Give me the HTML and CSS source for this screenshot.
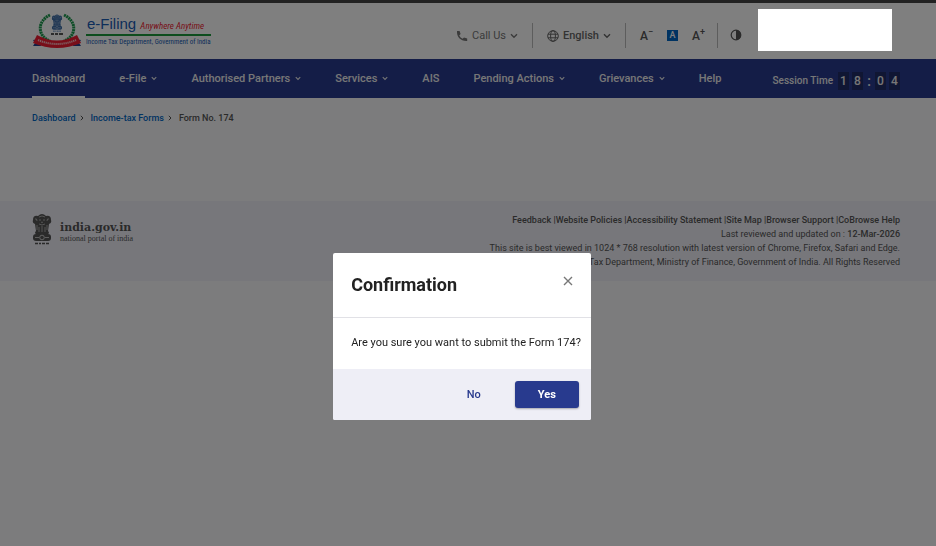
FILE: index.html
```html
<!DOCTYPE html>
<html lang="en">
<head>
    <meta charset="UTF-8">
    <meta name="viewport" content="width=device-width, initial-scale=1.0">
    <title>e-Filing - Form No. 174</title>
    <link rel="stylesheet" href="styles.css">
</head>
<body>

    <!-- shared icons -->
    <svg class="sprite" aria-hidden="true">
        <symbol id="chevron" viewBox="0 0 8 6">
            <path d="M1 1.2 L4 4.2 L7 1.2" fill="none" stroke="currentColor" stroke-width="1.4"/>
        </symbol>
        <symbol id="lions" viewBox="0 0 20 32">
            <path d="M6 3 Q10 -1 14 3 Q19 2 19 7 Q20 10 17 11 L16 18 Q18 20 16 21 H4 Q2 20 4 18 L3 11 Q0 10 1 7 Q1 2 6 3Z" fill="currentColor"/>
            <path d="M7 4 Q10 2 13 4 M7 7h2 M11 7h2 M9 9 Q10 10 11 9 M3 6 Q5 5 5 8 M17 6 Q15 5 15 8 M7 11 Q10 13 13 11 M7 14v5 M10 13v6 M13 14v5 M5 12v5 M15 12v5" fill="none" stroke="#fff" stroke-width="0.7" opacity="0.7"/>
            <rect x="1" y="21" width="18" height="7" rx="3" fill="currentColor"/>
            <circle cx="10" cy="24.500" r="2.300" fill="none" stroke="#fff" stroke-width="0.8" opacity="0.8"/>
            <path d="M3 24.500h4 M13 24.500h4" stroke="#fff" opacity="0.6"/>
            <path d="M3 30.500h3 M7 30.500h2 M10 30.500h3 M14 30.500h3" stroke="currentColor" stroke-width="1.500"/>
        </symbol>
    </svg>

    <header class="header">
        <a href="#" class="logo">
            <svg class="emblem" viewBox="0 0 50 36" aria-hidden="true">
                <path d="M18 2 C5 8 5 23 18 28" fill="none" stroke="#1d9a4e" stroke-width="3" stroke-dasharray="2 0.6"/>
                <path d="M32 2 C45 8 45 23 32 28" fill="none" stroke="#1d9a4e" stroke-width="3" stroke-dasharray="2 0.6"/>
                <circle cx="25" cy="12" r="9.500" fill="#fff" opacity="0.4"/>
                <svg x="19" y="1" width="12" height="18" viewBox="0 0 20 32" color="#3f6ea8"><use href="#lions"/></svg>
                <path d="M19 21h3 M23 21h3 M27 21h4" stroke="#222" stroke-width="1.500"/>
                <path d="M1 27 L8 26 L9 33 L1 33 L3 30Z M49 27 L42 26 L41 33 L49 33 L47 30Z" fill="#23408f"/>
                <path d="M5 22 Q25 33 45 22 L49 30 Q25 40 1 30Z" fill="#f01c33"/>
                <path d="M6 27 Q25 35 44 27" fill="none" stroke="#fff" stroke-width="2" stroke-dasharray="1.300 0.700" opacity="0.7"/>
            </svg>
            <span class="logo-text">
                <span class="logo-title">e-Filing <em>Anywhere Anytime</em></span>
                <span class="logo-sub">Income Tax Department, Government of India</span>
            </span>
        </a>
        <div class="tools">
            <button class="tool call">
                <svg width="12" height="12" viewBox="0 0 12 12" aria-hidden="true"><path d="M1 1h2.600l1 3-1.400 1.400a8 8 0 0 0 3.400 3.400L8 7.400l3.200 1V11C5 11.500 0.500 7 1 1Z" fill="currentColor"/></svg>
                <span>Call Us</span>
                <svg class="arrow" aria-hidden="true"><use href="#chevron"/></svg>
            </button>
            <button class="tool lang">
                <svg width="12" height="12" viewBox="0 0 12 12" fill="none" stroke="currentColor" aria-hidden="true"><circle cx="6" cy="6" r="5.300"/><ellipse cx="6" cy="6" rx="2.400" ry="5.300"/><path d="M1 4.200h10M1 7.800h10"/></svg>
                <span>English</span>
                <svg class="arrow" aria-hidden="true"><use href="#chevron"/></svg>
            </button>
            <div class="text-size">
                <button aria-label="Decrease text size">A<sup>−</sup></button>
                <button class="current" aria-label="Normal text size">A</button>
                <button aria-label="Increase text size">A<sup>+</sup></button>
            </div>
            <button class="contrast" aria-label="Contrast">
                <svg width="12" height="12" viewBox="0 0 12 12" aria-hidden="true"><circle cx="6" cy="6" r="4.800" fill="none" stroke="currentColor" stroke-width="1.200"/><path d="M6 1a5 5 0 0 1 0 10Z" fill="currentColor"/></svg>
            </button>
            <div class="user"></div>
        </div>
    </header>

    <nav class="nav">
        <a href="#" class="active">Dashboard</a>
        <a href="#">e-File <svg aria-hidden="true"><use href="#chevron"/></svg></a>
        <a href="#">Authorised Partners <svg aria-hidden="true"><use href="#chevron"/></svg></a>
        <a href="#">Services <svg aria-hidden="true"><use href="#chevron"/></svg></a>
        <a href="#">AIS</a>
        <a href="#">Pending Actions <svg aria-hidden="true"><use href="#chevron"/></svg></a>
        <a href="#">Grievances <svg aria-hidden="true"><use href="#chevron"/></svg></a>
        <a href="#">Help</a>
        <div class="session">
            <span class="session-label">Session Time</span>
            <span class="digit">1</span>
            <span class="digit">8</span>
            <span class="colon">:</span>
            <span class="digit">0</span>
            <span class="digit">4</span>
        </div>
    </nav>

    <main class="main">
        <div class="breadcrumb">
            <a href="#">Dashboard</a>
            <svg viewBox="0 0 4 6" aria-hidden="true"><path d="M0.800 0.800 L3 3 L0.800 5.200" fill="none" stroke="currentColor"/></svg>
            <a href="#">Income-tax Forms</a>
            <svg viewBox="0 0 4 6" aria-hidden="true"><path d="M0.800 0.800 L3 3 L0.800 5.200" fill="none" stroke="currentColor"/></svg>
            <span>Form No. 174</span>
        </div>
    </main>

    <footer class="footer">
        <a href="#" class="india">
            <svg width="20" height="32" aria-hidden="true"><use href="#lions"/></svg>
            <span class="india-text">
                <b>india.gov.in</b>
                <small>national portal of india</small>
            </span>
        </a>
        <div class="footer-text">
            <p class="links"><a href="#">Feedback</a> |<a href="#">Website Policies</a> |<a href="#">Accessibility Statement</a> |<a href="#">Site Map</a> |<a href="#">Browser Support</a> |<a href="#">CoBrowse Help</a></p>
            <p>Last reviewed and updated on : <b>12-Mar-2026</b></p>
            <p>This site is best viewed in 1024 * 768 resolution with latest version of Chrome, Firefox, Safari and Edge.</p>
            <p>Copyright © Income Tax Department, Ministry of Finance, Government of India. All Rights Reserved</p>
        </div>
    </footer>

    <div class="overlay">
        <div class="modal" role="dialog" aria-modal="true" aria-labelledby="modal-title">
            <div class="modal-header">
                <h2 id="modal-title">Confirmation</h2>
                <button class="close" aria-label="Close">
                    <svg width="10" height="10" viewBox="0 0 10 10" aria-hidden="true"><path d="M1 1 L9 9 M9 1 L1 9" stroke="currentColor" stroke-width="1.400"/></svg>
                </button>
            </div>
            <p class="modal-body">Are you sure you want to submit the Form 174?</p>
            <div class="modal-footer">
                <button class="btn">No</button>
                <button class="btn primary">Yes</button>
            </div>
        </div>
    </div>

</body>
</html>
```

FILE: styles.css
```css
* {
    box-sizing: border-box;
}

body {
    margin: 0;
    font-family: Roboto, sans-serif;
    font-size: 11px;
    color: #555;
    background-color: #f9f9fb;
}

a {
    color: inherit;
    text-decoration: none;
}

button {
    padding: 0;
    border: none;
    background: none;
    font: inherit;
    color: inherit;
    cursor: pointer;
}

.sprite {
    display: none;
}

.header {
    display: flex;
    justify-content: space-between;
    height: 59px;
    padding: 0 44px 0 32px;
    border-top: 3px solid #444;
    background-color: #fff;
}

.logo {
    display: flex;
    align-items: center;
    gap: 4px;
}

.emblem {
    width: 50px;
    height: 36px;
}

.logo-text {
    display: flex;
    flex-direction: column;
    padding-top: 2px;
    font-family: "Roboto Condensed", "Liberation Sans", sans-serif;
    color: #1a5cb4;
}

.logo-title {
    padding-left: 1px;
    font-family: "Liberation Sans", sans-serif;
    font-size: 15px;
    line-height: 16px;
    border-bottom: 2px solid #1d9a3c;
    white-space: nowrap;
}

.logo-title em {
    font-family: "Roboto Condensed", "Liberation Sans", sans-serif;
    font-size: 9px;
    color: #f01c33;
}

.logo-sub {
    font-size: 7px;
    line-height: 12px;
}

.tools {
    display: flex;
    align-items: center;
}

.tool {
    display: flex;
    align-items: center;
    gap: 4px;
    height: 25px;
    margin-top: 9px;
}

.arrow {
    width: 8px;
    height: 6px;
}

.call {
    padding-right: 14px;
    color: #777;
}

.lang {
    padding: 0 14px;
    border-left: 1px solid #bbb;
    border-right: 1px solid #bbb;
    font-weight: 500;
    color: #666;
}

.text-size {
    display: flex;
    align-items: center;
    gap: 14px;
    height: 25px;
    margin-top: 9px;
    padding: 0 12px 0 14px;
    border-right: 1px solid #bbb;
    font-size: 12px;
    font-weight: 500;
}

.text-size sup {
    font-size: 9px;
    line-height: 0;
}

.text-size .current {
    width: 11px;
    height: 11px;
    font-size: 9px;
    line-height: 11px;
    color: #fff;
    background-color: #0067c5;
}

.contrast {
    display: flex;
    margin: 8px 16px 0 12px;
}

/* sits above the page overlay */
.user {
    position: relative;
    z-index: 20;
    width: 134px;
    height: 42px;
    margin-bottom: 2px;
    background-color: #fff;
}

.nav {
    display: flex;
    gap: 34px;
    height: 39px;
    padding: 0 36px 0 32px;
    background-color: #283a8e;
    color: #eee;
    font-weight: 500;
}

.nav a {
    display: flex;
    align-items: center;
    gap: 5px;
    padding-top: 2px;
    border-bottom: 2px solid transparent;
    white-space: nowrap;
}

.nav a.active {
    border-bottom-color: #fff;
}

.nav svg {
    width: 6px;
    height: 5px;
}

.session {
    display: flex;
    align-items: center;
    gap: 3px;
    margin-left: auto;
    padding-top: 4px;
    white-space: nowrap;
}

.session-label {
    margin-right: 2px;
    font-size: 10px;
}

.digit {
    width: 11px;
    font-size: 12px;
    line-height: 18px;
    text-align: center;
    background-color: #212c66;
}

.colon {
    width: 6px;
    font-size: 14px;
    line-height: 18px;
    text-align: center;
}

.main {
    min-height: 103px;
    padding: 13px 32px;
}

.breadcrumb {
    display: flex;
    align-items: center;
    gap: 4px;
    font-size: 9px;
    line-height: 14px;
    font-weight: 500;
}

.breadcrumb a {
    color: #0067c5;
}

.breadcrumb svg {
    width: 4px;
    height: 6px;
    margin-right: 3px;
}

.footer {
    display: flex;
    justify-content: space-between;
    align-items: flex-start;
    padding: 12px 36px 12px 32px;
    background-color: #eeeef6;
    font-size: 9px;
}

.india {
    display: flex;
    align-items: center;
    gap: 8px;
}

.india-text {
    padding-top: 6px;
}

.india b,
.india small {
    display: block;
}

.india b {
    font-family: "DejaVu Serif", serif;
    font-size: 11px;
    line-height: 12px;
}

.india small {
    font-family: "Liberation Serif", serif;
    font-size: 8px;
    line-height: 9px;
}

.footer-text {
    text-align: right;
}

.footer-text p {
    margin: 0;
    line-height: 14px;
}

.footer-text b,
.links {
    font-weight: 500;
}

.overlay {
    position: fixed;
    inset: 0;
    z-index: 10;
    display: flex;
    align-items: flex-start;
    justify-content: center;
    padding-top: 253px;
    background-color: rgba(0, 0, 0, 0.5);
}

.modal {
    margin-right: 12px;
    border-radius: 2px;
    overflow: hidden;
    background-color: #fff;
    color: #222;
}

.modal-header {
    display: flex;
    justify-content: space-between;
    align-items: flex-start;
    padding: 20px 18px;
    border-bottom: 1px solid #e1e1e6;
}

.modal-header h2 {
    margin: 0;
    font-size: 18px;
    line-height: 24px;
    font-weight: 700;
}

.close {
    display: flex;
    padding-top: 3px;
    color: #777;
}

.modal-body {
    margin: 0;
    padding: 17px 10px 18px 18px;
    line-height: 16px;
}

.modal-footer {
    display: flex;
    justify-content: flex-end;
    gap: 12px;
    padding: 12px;
    background-color: #eeeef6;
}

.btn {
    width: 58px;
    height: 27px;
    border-radius: 3px;
    font-weight: 500;
    color: #283a8e;
}

.btn.primary {
    width: 64px;
    font-weight: 700;
    color: #fff;
    background-color: #283a8e;
    box-shadow: 0 1px 2px rgba(0, 0, 0, 0.3);
}
```
